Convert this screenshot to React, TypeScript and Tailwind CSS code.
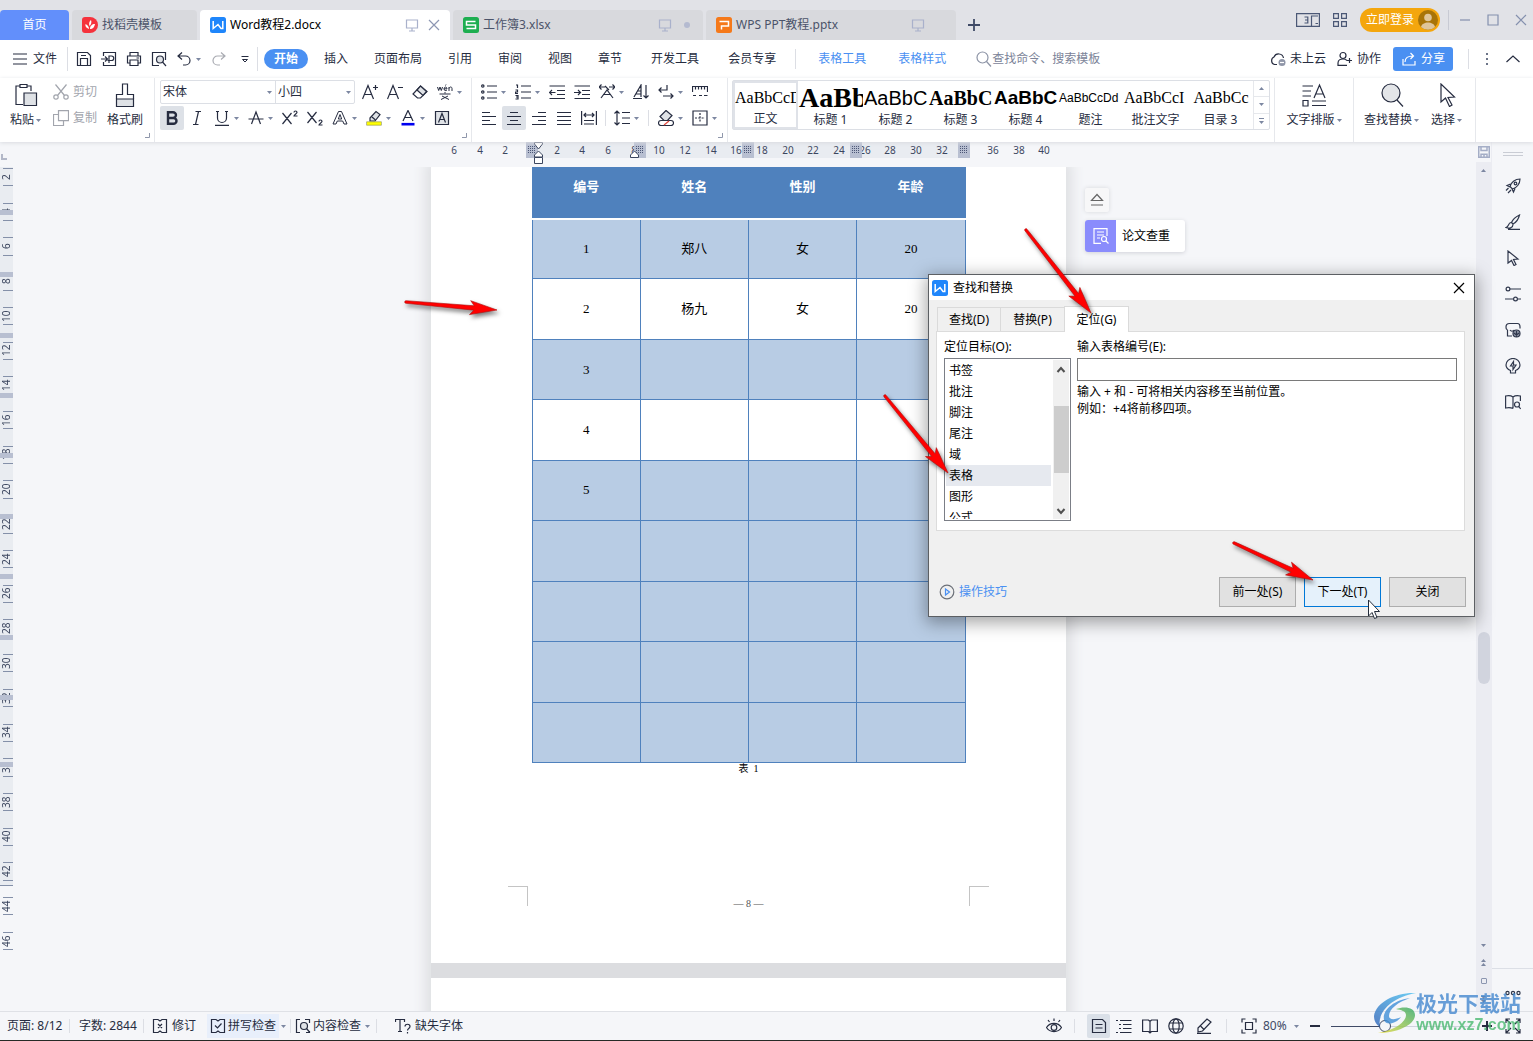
import React from 'react';

type IconProps = { children: React.ReactNode; className?: string; box?: string };

const Icon: React.FC<IconProps> = ({ children, className = 'size-4', box = '0 0 16 16' }) => (
  <svg
    viewBox={box}
    className={`shrink-0 ${className}`}
    fill="none"
    stroke="currentColor"
    strokeWidth="1.2"
    aria-hidden="true"
  >
    {children}
  </svg>
);

const Caret = ({ className = '' }: { className?: string }) => (
  <svg viewBox="0 0 5 3" className={`h-[3px] w-[5px] shrink-0 ${className}`} fill="#7c87a1" aria-hidden="true">
    <path d="M0 0h5L2.5 3z" />
  </svg>
);

const icons = {
  save: <><path d="M1.5 1.5h10l3 3v10h-13z" /><path d="M4.5 14V7.500h7V14M5 4.500h5" /></>,
  exportPdf: <><path d="M2.500 5V1.500h12v13h-12V11" /><path d="M0 8h6M4 5.500 6.500 8 4 10.500M8 12V5h2.500a2 2 0 0 1 0 4.500H6.500" /></>,
  print: <><path d="M4 5V1.500h8V5M4 12H1.500V5h13v7H12" /><path d="M4 9h8v5.500H4zM10.500 7H13" /></>,
  preview: <><path d="M14.500 9V1.500h-13v13H8" /><circle cx="9" cy="8.500" r="3.500" fill="#dfe2e6" /><path d="m11.500 11 3.500 4" /></>,
  undo: <path d="M6 1.500 2 5l4 3.500M2 5h7.500a4.500 4.500 0 0 1 0 9H7" />,
  redo: <path d="M10 1.500 14 5l-4 3.500M14 5H6.500a4.500 4.500 0 0 0 0 9H9" />,
  search: <><circle cx="6.500" cy="6.500" r="5.500" /><path d="m10.500 10.500 4.500 5" /></>,
  monitor: <path d="M2.500 3h11v8h-11zM8 11v3M5 14h6" />,
  cross: <path d="m3 3 10 10M13 3 3 13" />,
  scissors: <><circle cx="3" cy="13" r="2.200" /><circle cx="13" cy="13" r="2.200" /><path d="M2.500.500 11.500 11.500M13.500.500 4.500 11.500" /></>,
  copy: <><path d="M5.500.600h10v10h-10z" /><path d="M5.500 4.500h-5v11h10v-5" /></>,
  eraser: <><path d="m8.500 2 6.500 5.500-6.500 6.500h-3L1 10z" /><path d="m5 6 6 5.500 3.500-4L8.500 2z" fill="#dfe2e6" /></>,
  italic: <path d="M6.500 1.500H12M4 14.500h5.500M9.500 1.500l-3 13" />,
  underline: <path d="M2 1.500h3M11 1.500h3M3.500 1.500V8a4 4 0 0 0 9 0V1.500M1 15.400h14" />,
  strike: <path d="M3.500 14 8 2l4.500 12M.500 9h15" />,
  bullets: <><circle cx="1.800" cy="2" r="1.200" /><circle cx="1.800" cy="8" r="1.200" /><circle cx="1.800" cy="14" r="1.200" /><path d="M6 2h10M6 8h10M6 14h10" /></>,
  numbers: <path d="M1 1h1.500v3M.500 6h2v2h-2v1.500h2.500M.500 11.500h2.500v3.500H.500M1 13h2M6 2h10M6 8h10M6 14h10" />,
  outdent: <path d="M.500 2H16M8 6.500h8M8 10.500h8M.500 14.500H16M6.500 8.500h-6M3 6 .500 8.500 3 11" />,
  indent: <path d="M.500 2H16M8 6.500h8M8 10.500h8M.500 14.500H16M0 8.500h6.500M4 6l2.500 2.500L4 11" />,
  charWidth: <path d="m2 14 6-8 6 8M4 10.500h8M0 3h6M10 3h6M2.500.500 0 3l2.500 2.500M13.500.500 16 3l-2.500 2.500M6 2l4 4" />,
  sort: <path d="m1 13 7-12v12M3 10h5M4.500 7H8M0 14.500h9M13 1v13M10.500 11.500 13 14l2.500-2.500" />,
  wrap: <path d="M9 1v5H1M3.500 3.500 1 6l2.500 2.500M5 12h10M12.500 9.500 15 12l-2.500 2.500" />,
  tabStops: <path d="M.500 8V2.500h15V8M3.500 2.500v3M6.500 2.500v3M9.500 2.500v3M12.500 2.500v3M1 11.500h3M7 11.500h3M12 11.500h3.500" />,
  left: <path d="M1 2.500h8M1 6.500h14M1 10.500h8M1 14.500h14" />,
  center: <path d="M4 2.500h8M1 6.500h14M4 10.500h8M1 14.500h14" />,
  right: <path d="M7 2.500h8M1 6.500h14M7 10.500h8M1 14.500h14" />,
  justify: <path d="M1 2.500h14M1 6.500h14M1 10.500h14M1 14.500h14" />,
  distribute: <path d="M.600 1v14M15.400 1v14M3 5h10M5 3 3 5l2 2M11 3l2 2-2 2M3 10.500h10M3 14h10" />,
  spacing: <path d="M3 1v14M.500 3.500 3 1l2.500 2.500M.500 12.500 3 15l2.500-2.500M8 2.500h8M8 8h8M8 13.500h8" />,
  fill: <><path d="m8 .500 6 5-4.500 5H6l-4-4z" fill="#dfe2e6" /><path d="M3 10.500h10a2 2 0 0 1 0 5H3a2 2 0 0 1 0-5z" fill="#fff" /><path d="m6 15 5-4" stroke="#e0483e" /></>,
  borders: <><path d="M1 1h14v14H1z" /><path d="M8 3v10M3 8h10" strokeDasharray="2 1.300" /></>,
  pen: <><path d="m2 10 9-9 4 3-8.500 9L2 14z" /><path d="M4.500 8 8 11.500M1 15.400h14" /></>,
  pointer: <path d="M3 1v12l3.500-2.500L9 15.500l2-1-2.500-5 4.500-.500z" />,
  sliders: <><circle cx="3" cy="3" r="1.900" /><path d="M5 3h11M0 13h8.500M12.500 13H16" /><circle cx="10.500" cy="13" r="1.900" /></>,
  rocket: <><path d="M15 1C10 1 6 4.500 5 8.500L7.500 11C11.500 10 15 6 15 1zM5.500 6 2 7.500 5 9M10 10.500 8.500 14 7 11M3.500 10 1 12.500M6 12l-3 3" /><circle cx="10.500" cy="5.500" r="1.300" /></>,
  brush: <path d="M14.500 1c-4 2-7 5-8 7.500l1.500 1.500C11 8.500 13.500 5 14.500 1zM6 8.500C3 9 4 12.500 1 13.500c3 1.500 7 .500 7-3M3 15.400h12" />,
  shapes: <><path d="M7 14H2.500V8M2.500 8A3 3 0 0 1 1 5c0-3 2-3.500 3.500-3.500h8C14 1.500 15 3 15 5v1.500M5 8c1 1.500 3 1.500 4 0" /><circle cx="11.500" cy="11.500" r="3.500" fill="#8e95a5" /><path d="M11.500 15V9M9 11l2.500 2L14 11" /></>,
  bulb: <><path d="M5.500 12.500C2 11 1 9 1 7a7 6.500 0 0 1 14 0c0 2-1 4-4.500 5.500V15h-5z" /><path d="M8.500 3.500 5.500 8H8v3.500L11 7H8.500z" /></>,
  bookSearch: <><path d="M8 3v11.500M8 3C6 1.500 3 1.500.600 2v12c2.400-.500 5.400-.500 7.400.500M8 3c2-1.500 5-1.500 7.400-1V7" /><circle cx="12" cy="10.500" r="2.500" /><path d="m13.700 12.300 2 2.700" /></>,
  pageDoc: <path d="M1.500 1.500h10l3 3v10h-13zM4.500 6.500h7M4.500 10h7" />,
  outline: <path d="M0 2.500h2M4 2.500h11.500M3 6.500h2M7 6.500h8.500M3 10.500h2M7 10.500h8.500M0 14.500h2M4 14.500h11.500" />,
  book: <path d="M8 3v12M.600 2H6.500L8 3.500 9.500 2h5.900v11.500H9.500L8 15l-1.500-1.500H.600z" />,
  globe: <><circle cx="8" cy="8" r="7.200" /><ellipse cx="8" cy="8" rx="3.200" ry="7.200" /><path d="M1.500 5h13M1.500 11h13" /></>,
  fit: <path d="M4.500 1H1v3.500M11.500 1H15v3.500M4.500 15H1v-3.500M11.500 15H15v-3.500M4.500 4.500h7v7h-7z" />,
  full: <path d="M5 1H1v4M11 1h4v4M5 15H1v-4M11 15h4v-4M1 1l5 5M15 1l-5 5M1 15l5-5M15 15l-5-5" />,
  eye: <><path d="M.500 9.500C4 4 12 4 15.500 9.500 12 15 4 15 .500 9.500zM8 3V.500M3.500 4 2 2M12.500 4 14 2" /><circle cx="8" cy="9.500" r="2.800" /></>,
  checkBox: <path d="M6 1.500H1.500v13H6L8 13l2 1.500h4.500v-13H10L8 3zM5 7.500l2.500 2.500 4-4.500" />,
  reviseBox: <path d="M6 1.500H1.500v13H6L8 13l2 1.500h4.500v-13H10L8 3zM6 6l4 4M10 6l-4 4" />,
};

const WpsLogo = ({ color, letter, size = 'size-4' }: { color: string; letter: 'w' | 's' | 'p'; size?: string }) => (
  <svg viewBox="0 0 16 16" className={`shrink-0 ${size}`} fill="none" stroke="#fff" strokeWidth="1.500" aria-hidden="true">
    <rect width="16" height="16" rx="2.500" fill={color} stroke="none" />
    {letter === 'w' && <path d="M3.200 4v7.500L8 7.500l3 4h1.800V4" />}
    {letter === 's' && <path d="M12.500 4.500h-9V8h9v3.500h-9" />}
    {letter === 'p' && <path d="M3.500 4.500h9V9H5.500v3.500" />}
  </svg>
);

type TabProps = { logo: React.ReactNode; title: string; active?: boolean; end?: 'close' | 'dot' };

const DocTab: React.FC<TabProps> = ({ logo, title, active, end }) => (
  <div
    className={`flex h-[30px] w-[250px] shrink-0 items-center rounded-t pl-2.5 ${
      active ? 'bg-white text-black' : 'bg-[#d8d9dd] text-[#4b5369]'
    }`}
  >
    {logo}
    <span className="ml-1 flex-1">{title}</span>
    <Icon className="size-4 text-[#a9b1cb]">{icons.monitor}</Icon>
    <span className="mr-0.5 flex w-7 justify-center">
      {end === 'close' && (
        <button aria-label="关闭标签"><Icon className="size-4 text-[#8d97b3]">{icons.cross}</Icon></button>
      )}
      {end === 'dot' && <span className="size-1.5 rounded-full bg-[#b4bad0]" />}
    </span>
  </div>
);

const TitleBar = () => (
  <header className="flex h-10 shrink-0 items-end bg-[#e1e2e7]">
    <div className="flex gap-[3px]">
      <button className="h-[30px] w-[69px] rounded-t bg-[#628ffb] text-white">首页</button>
      <div className="flex h-[30px] w-[125px] items-center rounded-t bg-[#d8d9dd] pl-2.5 text-[#4b5369]">
        <svg viewBox="0 0 16 16" className="size-4" aria-hidden="true">
          <path d="M0 3a3 3 0 0 1 3-3h5a8 8 0 0 1 0 16H3a3 3 0 0 1-3-3z" fill="#f5323c" />
          <path d="M7 12C4 11 3 9 3.500 7 6 8 7 10 7 12zM7.500 9C6.500 6.500 7.500 4 9 3c1 2 0 5-1.500 6zM8 12c0-3 2-5 5-5-.500 3-2 5-5 5z" fill="#fff" />
        </svg>
        <span className="ml-1">找稻壳模板</span>
      </div>
      <DocTab logo={<WpsLogo color="#1f86fb" letter="w" />} title="Word教程2.docx" active end="close" />
      <DocTab logo={<WpsLogo color="#1dae50" letter="s" />} title="工作簿3.xlsx" end="dot" />
      <DocTab logo={<WpsLogo color="#f5791a" letter="p" />} title="WPS PPT教程.pptx" />
    </div>
    <button aria-label="新建" className="ml-2.5 flex h-[30px] items-center text-[#3f4a66]">
      <Icon><path d="M8 2v12M2 8h12" strokeWidth="1.800" /></Icon>
    </button>
    <div className="ml-auto flex h-10 items-center pr-1 text-[#4b5876]">
      <Icon className="h-4 w-6" box="0 0 24 16">
        <path d="M15.500 14.400H.600V1.600h22.800v12.800h-7.900V4H22M19.500 11.500h2.500M8.500 5h3.300v6H8.500M9 8h2.800" />
      </Icon>
      <Icon className="ml-3 size-4"><path d="M1.600 1.600h4.800v4.800H1.600zM9.600 1.600h4.800v4.800H9.600zM1.600 9.600h4.800v4.800H1.600zM9.600 9.600h4.800v4.800H9.600z" /></Icon>
      <button className="ml-3 flex h-6 w-20 items-center justify-between rounded-full bg-[#f4a60d] pr-0.5 pl-1.5 text-white">
        立即登录
        <svg viewBox="0 0 20 20" className="size-5" aria-hidden="true">
          <circle cx="10" cy="10" r="10" fill="#a87408" />
          <circle cx="10" cy="7.500" r="3.800" fill="#dfc59a" />
          <path d="M3 17c1-6 13-6 14 0a10 10 0 0 1-14 0z" fill="#dfc59a" />
        </svg>
      </button>
      <span className="mx-2 h-5 w-px bg-[#c8cad3]" />
      <div className="flex gap-3 text-[#8490ae]">
        <button aria-label="最小化"><Icon><path d="M3 8h10" /></Icon></button>
        <button aria-label="最大化"><Icon><path d="M3 3h10v10H3z" /></Icon></button>
        <button aria-label="关闭"><Icon>{icons.cross}</Icon></button>
      </div>
    </div>
  </header>
);

const Divider = ({ className = 'h-6' }: { className?: string }) => (
  <span className={`w-px shrink-0 bg-[#dcdee4] ${className}`} />
);

const menuTabs = ['插入', '页面布局', '引用', '审阅', '视图', '章节'];

const MenuBar = () => (
  <nav className="flex h-[38px] shrink-0 items-center bg-white text-[#262c40]">
    <button className="ml-3 flex items-center gap-[5px]">
      <Icon><path d="M1 3h14M1 8h14M1 13h14" /></Icon>文件
    </button>
    <Divider className="ml-2.5 h-6" />
    <div className="flex w-[189px] items-center pl-2">
      <button aria-label="保存"><Icon>{icons.save}</Icon></button>
      <button aria-label="输出为PDF" className="ml-[9px]"><Icon>{icons.exportPdf}</Icon></button>
      <button aria-label="打印" className="ml-[9px]"><Icon>{icons.print}</Icon></button>
      <button aria-label="打印预览" className="ml-[9px]"><Icon>{icons.preview}</Icon></button>
      <button aria-label="撤销" className="ml-[9px] flex items-center gap-1"><Icon>{icons.undo}</Icon><Caret /></button>
      <button aria-label="恢复" className="ml-2.5 text-[#a9abb2]"><Icon>{icons.redo}</Icon></button>
      <button aria-label="更多" className="ml-2.5"><Icon><path d="M4.500 5.500h7M5.500 8.500 8 11l2.500-2.500z" strokeWidth="1" /></Icon></button>
    </div>
    <Divider />
    <button className="ml-1.5 h-5 w-11 rounded-full bg-[#4a90f2] font-bold text-white">开始</button>
    <div className="ml-4 flex gap-[26px]">
      {menuTabs.map((tab) => <button key={tab}>{tab}</button>)}
    </div>
    <div className="ml-[29px] flex gap-[29px]">
      <button>开发工具</button>
      <button>会员专享</button>
    </div>
    <Divider className="ml-[19px] h-5" />
    <div className="ml-[22px] flex gap-8 text-[#4a90f2]">
      <button>表格工具</button>
      <button>表格样式</button>
    </div>
    <label className="ml-[30px] flex items-center text-[#8d94a6]">
      <Icon>{icons.search}</Icon>
      <input
        aria-label="查找命令"
        placeholder="查找命令、搜索模板"
        className="w-[120px] outline-none placeholder:text-[#7b8398]"
      />
    </label>
    <div className="ml-auto flex items-center pr-3">
      <button className="flex items-center gap-1">
        <Icon><path d="M7 13.500H4.500a4 4 0 0 1-.500-7.500 5 5 0 0 1 9.500 1" /><circle cx="12" cy="11.500" r="3.500" fill="#8f96a8" stroke="none" /><path d="M10 11.500h4" stroke="#fff" /></Icon>
        未上云
      </button>
      <button className="ml-[11px] flex items-center gap-1">
        <Icon><circle cx="6" cy="4.500" r="3" /><path d="M10 14.400H1V12c0-3 3-4 5-4s3 .500 4 1.500M12.500 7v5M10 9.500h5" /></Icon>
        协作
      </button>
      <button className="ml-3 flex h-6 w-[60px] items-center justify-center gap-1 rounded-[3px] bg-[#4a90f2] text-white">
        <Icon><path d="M2 8v6h12v-4M4 11c0-4 3-6 8-6M9.500 2l3 3-3 3" /></Icon>
        分享
      </button>
      <Divider className="ml-[15px] h-5" />
      <button aria-label="更多选项" className="ml-2.5"><Icon><path d="M8 2v2M8 7v2M8 12v2" strokeWidth="2" stroke="#6c7488" /></Icon></button>
      <button aria-label="收起功能区" className="ml-2.5"><Icon><path d="m1.500 11 6.500-6 6.500 6" /></Icon></button>
    </div>
  </nav>
);

type ToolProps = { label: string; children: React.ReactNode; caret?: boolean; active?: boolean };

const Tool: React.FC<ToolProps> = ({ label, children, caret, active }) => (
  <button aria-label={label} className="flex shrink-0 items-center">
    <span className={`flex size-6 items-center justify-center rounded-[2px] ${active ? 'bg-[#dde1e7]' : ''}`}>
      <Icon>{children}</Icon>
    </span>
    {caret && <span className="w-[9px]"><Caret /></span>}
  </button>
);

const BigTool = ({ label, icon, caret }: { label: string; icon: React.ReactNode; caret?: boolean }) => (
  <button className="flex flex-col items-center">
    <span className="flex h-[30px] items-center">{icon}</span>
    <span className="flex h-5 items-center gap-0.5">{label}{caret && <Caret />}</span>
  </button>
);

const Corner = () => (
  <svg viewBox="0 0 5 5" className="absolute right-1 bottom-1 size-[5px]" fill="none" stroke="#8f97ab" aria-hidden="true">
    <path d="M4.500 0v4.500H0" />
  </svg>
);

const group = 'relative flex shrink-0 border-r border-[#e6e8ec] pt-0.5';

const styleCells = [
  { name: '正文', font: "font-['Liberation_Serif'] text-base", sample: 'AaBbCcD' },
  { name: '标题 1', font: "font-['Liberation_Serif'] text-[28px] font-bold", sample: 'AaBb' },
  { name: '标题 2', font: "font-['Liberation_Sans'] text-xl", sample: 'AaBbC' },
  { name: '标题 3', font: "font-['Liberation_Serif'] text-xl font-bold", sample: 'AaBbC' },
  { name: '标题 4', font: "font-['Liberation_Sans'] text-[19px] font-bold", sample: 'AaBbC' },
  { name: '题注', font: "font-['Liberation_Sans'] text-xs", sample: 'AaBbCcDd' },
  { name: '批注文字', font: "font-['Liberation_Serif'] text-base", sample: 'AaBbCcI' },
  { name: '目录 3', font: "font-['Liberation_Serif'] text-base", sample: 'AaBbCc' },
];

const Ribbon = () => (
  <section className="relative z-10 flex h-16 shrink-0 bg-white text-[#262c40] shadow-[0_1px_4px_#d9dbe0]">
    <div className={`${group} w-[155px] pl-2.5`}>
      <BigTool label="粘贴" caret icon={
        <Icon className="size-6" box="0 0 24 24">
          <path d="M9 21.500H2V3h4M13 3h4v5" /><path d="M6 1.500h7v3H6z" /><path d="M10 10h12.500v12.500H10z" fill="#dfe2e6" />
        </Icon>
      } />
      <div className="ml-3 flex flex-col gap-0.5 text-[#a2a5ad]">
        <button className="flex h-6 items-center gap-1"><Icon>{icons.scissors}</Icon>剪切</button>
        <button className="flex h-6 items-center gap-1"><Icon>{icons.copy}</Icon>复制</button>
      </div>
      <div className="ml-2.5">
        <BigTool label="格式刷" icon={
          <Icon className="size-6" box="0 0 24 24">
            <path d="M3.500 16h17v7.500h-17z" fill="#dfe2e6" /><path d="M3.500 16v-4.500h6V1h5v10.500h6V16" />
          </Icon>
        } />
      </div>
      <Corner />
    </div>

    <div className={`${group} w-[317px] flex-col gap-0.5 pl-[5px]`}>
      <div className="flex gap-px">
        <div className="mr-0.5 flex h-6 w-[195px] rounded-[2px] border border-[#dcdfe5]">
          <label className="relative flex w-[115px] items-center border-r border-[#dcdfe5]">
            <select aria-label="字体" className="w-full appearance-none pl-0.5 outline-none"><option>宋体</option></select>
            <Caret className="absolute right-[3px]" />
          </label>
          <label className="relative flex flex-1 items-center">
            <select aria-label="字号" className="w-full appearance-none pl-0.5 outline-none"><option>小四</option></select>
            <Caret className="absolute right-[3px]" />
          </label>
        </div>
        <Tool label="增大字号"><path d="m.500 15 5.500-13.500L11.500 15M2.500 10.500h7M11 3.500h5M13.500 1v5" /></Tool>
        <Tool label="减小字号"><path d="m.500 15 5.500-13.500L11.500 15M2.500 10.500h7M11 3.500h5" /></Tool>
        <Tool label="清除格式">{icons.eraser}</Tool>
        <Tool label="拼音指南" caret>
          <path d="m.500 3 1.200 3.500L3 3l1.300 3.500L5.500 3M7 4.800h3C10 2.500 7 2.500 7 4.800s2 2 3 1.200M9 .500 8.500 1.500M12 7V3M12 4.500c.500-2 3-2 3 0V7M8 8V9.500M2.500 10h11M5 12l7 3.500M11 12l-7 3.500" strokeWidth="1" />
        </Tool>
      </div>
      <div className="flex gap-px">
        <Tool label="加粗" active><path d="M4 2.200h5a3 2.900 0 0 1 0 5.800H4zM4 8h5.500a3 2.900 0 0 1 0 5.800H4z" strokeWidth="2.400" /></Tool>
        <Tool label="倾斜">{icons.italic}</Tool>
        <Tool label="下划线" caret>{icons.underline}</Tool>
        <Tool label="删除线" caret>{icons.strike}</Tool>
        <Tool label="上标"><path d="m.500 3 9 11M9.500 3l-9 11M12 2.500c0-2 3-2 3 0 0 1-3 2-3 3.500h3.500" /></Tool>
        <Tool label="下标"><path d="m.500 2 9 11M9.500 2l-9 11M12 11.500c0-2 3-2 3 0 0 1-3 2-3 3.500h3.500" /></Tool>
        <Tool label="文字效果" caret><path d="M1 14 6.500 1.500h3L15 14h-3l-1.300-3H5.300L4 14zM8 4.500 6.300 9h3.400z" strokeWidth="1" /></Tool>
        <Tool label="突出显示" caret>
          <path d="m4 8 6-6.500 4 3L9 11H4z" fill="#dfe2e6" /><path d="m6 7 3.500 3" /><path d="M1 13.500h14" stroke="#ff0" strokeWidth="3.500" /><path d="M.500 11.800h15v3.400H.500z" stroke="#8b8f4a" strokeWidth=".600" />
        </Tool>
        <Tool label="字体颜色" caret><path d="m3 11 5-10.500L13 11M5 7.500h6" /><path d="M1.500 14.200h13" stroke="#0000f0" strokeWidth="2.600" /></Tool>
        <Tool label="字符底纹"><path d="M1.500 1.500h13v13h-13z" fill="#dfe2e6" /><path d="m4.500 12.500 3.500-9 3.500 9M5.500 9.500h5" /></Tool>
      </div>
      <Corner />
    </div>

    <div className={`${group} w-64 flex-col gap-0.5 pl-[5px]`}>
      <div className="flex gap-px">
        <Tool label="项目符号" caret>{icons.bullets}</Tool>
        <Tool label="编号" caret>{icons.numbers}</Tool>
        <Tool label="减少缩进">{icons.outdent}</Tool>
        <Tool label="增加缩进">{icons.indent}</Tool>
        <Tool label="中文版式" caret>{icons.charWidth}</Tool>
        <Tool label="排序">{icons.sort}</Tool>
        <Tool label="换行" caret>{icons.wrap}</Tool>
        <Tool label="制表位">{icons.tabStops}</Tool>
      </div>
      <div className="flex items-center gap-px">
        <Tool label="左对齐">{icons.left}</Tool>
        <Tool label="居中" active>{icons.center}</Tool>
        <Tool label="右对齐">{icons.right}</Tool>
        <Tool label="两端对齐">{icons.justify}</Tool>
        <Tool label="分散对齐">{icons.distribute}</Tool>
        <Divider className="mx-[3px] h-4" />
        <Tool label="行距" caret>{icons.spacing}</Tool>
        <Divider className="mx-1 h-4" />
        <Tool label="底纹颜色" caret>{icons.fill}</Tool>
        <Tool label="边框" caret>{icons.borders}</Tool>
      </div>
      <Corner />
    </div>

    <div className={`${group} w-[547px] pl-1`}>
      <div className="flex h-[50px] w-[538px] rounded-[2px] border border-[#dcdfe5]">
        {styleCells.map((cell, i) => (
          <button
            key={cell.name}
            className={`flex w-[65px] shrink-0 flex-col items-center overflow-hidden ${
              i === 0 ? 'border-2 border-[#dfe2e8]' : ''
            }`}
          >
            <span
              className={`flex w-full items-center overflow-hidden pt-0.5 text-black ${cell.font} ${
                i === 0 ? 'h-[29px]' : 'h-[31px] pl-px'
              } ${cell.name === '目录 3' ? 'justify-center' : ''}`}
            >
              {cell.sample}
            </span>
            <span className="leading-4">{cell.name}</span>
          </button>
        ))}
        <div className="flex w-4 flex-col divide-y divide-[#e6e8ec] border-l border-[#e6e8ec]">
          <button aria-label="上一行" className="flex flex-1 items-center justify-center"><Caret className="rotate-180" /></button>
          <button aria-label="下一行" className="flex flex-1 items-center justify-center"><Caret /></button>
          <button aria-label="展开样式" className="flex flex-1 flex-col items-center justify-center gap-0.5">
            <span className="h-px w-[5px] bg-[#7c87a1]" /><Caret />
          </button>
        </div>
      </div>
    </div>

    <div className={`${group} w-[79px] justify-center`}>
      <BigTool label="文字排版" caret icon={
        <Icon className="size-6" box="0 0 24 24">
          <path d="M.500 3H11M.500 8H9M.500 13H9M1 17.500h5V23H1zM10 18h14M10 22.500h14M12 15l5.500-13L23 15M14 11h7" />
        </Icon>
      } />
    </div>
    <div className={`${group} w-[122px] gap-3 pl-2.5`}>
      <BigTool label="查找替换" caret icon={
        <Icon className="size-6" box="0 0 24 24"><circle cx="11" cy="10" r="9" fill="#e3e5e8" /><path d="m17 17 6 6.500" /></Icon>
      } />
      <BigTool label="选择" caret icon={
        <Icon className="size-6" box="0 0 24 24"><path d="M6 1v18l4.500-4 4 8.500 2.500-1.500-4-7.500 6.500-.500z" /></Icon>
      } />
    </div>
  </section>
);

const hLabels = [-6, -4, -2, 2, 4, 6, 8, 10, 12, 14, 16, 18, 20, 22, 24, 26, 28, 30, 32, 36, 38, 40];
const columnMarks = [95, 203, 311, 419, 527];

const HorizontalRuler = () => (
  <div className="h-[25px] shrink-0 pl-2">
    <div className="relative mx-auto h-full w-[635px] text-[10px] leading-4 text-[#3c465f]">
      <div className="absolute top-0 left-[95px] h-4 w-[444px] bg-[#e9ecf1]" />
      {hLabels.map((n) => (
        <span key={n} className="absolute top-0 w-5 text-center" style={{ left: Math.round(90 + n * 12.83) }}>
          {Math.abs(n)}
        </span>
      ))}
      {columnMarks.map((x) => (
        <span key={x} className="absolute top-0 flex h-4 w-3 items-center justify-center bg-[#b8bfd1]" style={{ left: x }}>
          <svg viewBox="0 0 8 8" className="size-2" fill="none" stroke="#4b5676" strokeDasharray="1 1" aria-hidden="true">
            <path d="M0 .500h8M0 2.500h8M0 4.500h8M0 6.500h8" />
          </svg>
        </span>
      ))}
      <svg viewBox="0 0 11 22" className="absolute top-0 left-[102px] h-[22px] w-[11px]" fill="#fff" stroke="#3c465f" aria-hidden="true">
        <path d="M1.500.500h8V2l-4 5-4-5zM5.500 9l4 4v2h-8v-2zM1.500 15.500h8v6h-8z" />
      </svg>
      <svg viewBox="0 0 11 8" className="absolute top-2 left-[198px] h-2 w-[11px]" fill="#fff" stroke="#3c465f" aria-hidden="true">
        <path d="m5.500 1 4 4v2.500h-8V5z" />
      </svg>
    </div>
  </div>
);

const vLabels = Array.from({ length: 23 }, (_, i) => (i + 1) * 2);
const vTicks = Array.from({ length: 46 }, (_, i) => Math.round(1 + i * 17.36));
const rowMarks = [43, 105, 166, 226, 286, 347, 407, 468, 528, 595];

const VerticalRuler = () => (
  <div className="w-[13px] shrink-0 text-[10px] leading-3 text-[#3c465f]">
    <div className="flex h-[25px] items-end pb-[7px] pl-px">
      <span className="size-1.5 border-b-2 border-l-2 border-[#b3b8c8]" />
    </div>
    <div className="relative h-[719px] border-b border-[#8490a9] bg-[#e9ecf1]">
      {vTicks.map((y) => (
        <span key={y} className="absolute right-0 h-px w-2.5 bg-[#8490a9]" style={{ top: y }} />
      ))}
      {vLabels.map((n) => (
        <span
          key={n}
          className="absolute left-0 h-5 w-3 rotate-180 text-center [writing-mode:vertical-rl]"
          style={{ top: Math.round(n * 17.36 - 35) }}
        >
          {n}
        </span>
      ))}
      {rowMarks.map((y) => (
        <span key={y} className="absolute left-0 h-[5px] w-full bg-[#b8bfd1]" style={{ top: y }} />
      ))}
    </div>
  </div>
);

const rows = [
  ['1', '郑八', '女', '20'],
  ['2', '杨九', '女', '20'],
  ['3', '', '', ''],
  ['4', '', '', ''],
  ['5', '', '', ''],
  ['', '', '', ''],
  ['', '', '', ''],
  ['', '', '', ''],
  ['', '', '', ''],
];

const DocumentView = () => (
  <div className="min-h-0 flex-1 overflow-hidden pl-2">
    <div className="relative mx-auto w-[635px] bg-[#dcdde0] shadow-[0_0_12px_6px_#dfe0e3]">
      <article className="h-[796px] bg-white font-['Liberation_Serif','Noto_Sans_CJK_SC',serif] text-black">
        <table className="mx-auto h-[596px] w-[434px] table-fixed border-collapse border border-[#4f81bd] text-center text-[13px]">
          <thead>
            <tr className="h-[51px] border-b-2 border-b-white bg-[#4f81bd] text-white">
              {['编号', '姓名', '性别', '年龄'].map((h) => (
                <th key={h} className="pb-3 font-bold">{h}</th>
              ))}
            </tr>
          </thead>
          <tbody>
            {rows.map((row, i) => (
              <tr key={i} className={`h-[60px] ${i === 1 || i === 3 ? 'bg-white' : 'bg-[#b8cce4]'}`}>
                {row.map((cell, j) => (
                  <td key={j} className={`border-x border-b border-[#4f81bd] ${i === 0 ? '' : 'border-t'}`}>{cell}</td>
                ))}
              </tr>
            ))}
          </tbody>
        </table>
        <p className="h-3 text-center text-[10px] leading-3">表 &nbsp;1</p>
        <footer className="mx-[77px] mt-[111px] flex justify-between">
          <span className="size-5 border-t border-r border-[#c4c4c4]" />
          <span className="mt-3 text-[10px] leading-3 text-[#555]">— 8 —</span>
          <span className="size-5 border-t border-l border-[#c4c4c4]" />
        </footer>
      </article>
      <div className="mt-[15px] h-[60px] bg-white" />

      {/* floating tools beside the page */}
      <div className="absolute top-[21px] left-[654px] flex flex-col items-start gap-2">
        <button aria-label="收起" className="flex size-6 items-center justify-center rounded-[2px] bg-[#f7f7f8] text-[#666] shadow-[0_0_4px_#d5d7dc]">
          <Icon><path d="m8 2.500 5.500 6h-11zM2 13h12" /></Icon>
        </button>
        <button className="flex h-8 w-[100px] items-center rounded-[3px] bg-white text-black shadow-[0_1px_4px_#d0d2d8]">
          <span className="flex h-8 w-[31px] items-center justify-center rounded-l-[3px] bg-[#8a8cfc] text-white">
            <Icon><path d="M8 15.400H1V.600h13V8M4 4h7M4 7h7M4 10h3" /><circle cx="11" cy="11" r="2.500" /><path d="m13 13 2.500 2.500" /></Icon>
          </span>
          <span className="ml-1.5">论文查重</span>
        </button>
      </div>
    </div>
  </div>
);

const ScrollBar = () => (
  <div className="flex w-4 shrink-0 flex-col items-center bg-[#ebecf2] pr-px text-[#7c87a1]">
    <div className="flex h-5 w-full items-center justify-center bg-[#f5f6f9]">
      <Icon className="size-3 text-[#a4adc6]"><path d="M1 1h14v14H1zM4 1v5h8V1M4 15v-4h8v4M8 11v4" strokeWidth="2" /></Icon>
    </div>
    <Caret className="mt-[7px] rotate-180" />
    <div className="mt-[460px] h-[52px] w-3 rounded-md bg-[#d1d4de]" />
    <div className="mt-auto mb-2 flex flex-col items-center gap-3">
      <Caret />
      <span className="flex flex-col gap-px"><Caret className="rotate-180" /><Caret className="rotate-180" /></span>
      <span className="size-1.5 rounded-[1px] border border-[#8c96b0]" />
      <span className="flex flex-col gap-px"><Caret /><Caret /></span>
    </div>
  </div>
);

const sideTools = [
  { label: '快捷', icon: icons.rocket },
  { label: '样式', icon: icons.brush },
  { label: '选择窗格', icon: icons.pointer },
  { label: '设置', icon: icons.sliders },
  { label: '素材', icon: icons.shapes },
  { label: '提示', icon: icons.bulb },
  { label: '帮助', icon: icons.bookSearch },
];

const SideBar = () => (
  <aside className="flex w-[41px] shrink-0 flex-col items-center text-[#2f374c]">
    <span className="mt-2.5 h-1 w-5 border-y border-[#c9ccd4]" />
    <div className="mt-[22px] flex flex-col gap-5">
      {sideTools.map((tool) => (
        <button key={tool.label} aria-label={tool.label}><Icon>{tool.icon}</Icon></button>
      ))}
    </div>
    <div className="mt-auto mb-2.5 flex w-full flex-col items-center gap-4 border-t border-[#dcdfe6] pt-4">
      <button aria-label="更多工具">
        <Icon><circle cx="2.500" cy="8" r="1.600" /><circle cx="8" cy="8" r="1.600" /><circle cx="13.500" cy="8" r="1.600" /></Icon>
      </button>
    </div>
  </aside>
);

const StatusBar = () => (
  <footer className="flex h-[30px] shrink-0 items-center border-t border-b border-t-[#dfe1e6] border-b-[#262a26] bg-[#f5f6f9] text-[#262c40]">
    <span className="ml-[7px] w-[62px]">页面: 8/12</span>
    <Divider className="h-3.5" />
    <span className="ml-[9px] w-16">字数: 2844</span>
    <Divider className="h-3.5" />
    <button className="ml-2 flex w-[55px] items-center gap-1"><Icon>{icons.reviseBox}</Icon>修订</button>
    <button className="flex h-6 items-center gap-0.5 bg-[#e8effb] px-[3px]"><Icon>{icons.checkBox}</Icon>拼写检查</button>
    <Caret className="mx-0.5" />
    <Divider className="ml-0.5 h-3.5" />
    <button className="ml-1 flex items-center gap-0.5">
      <Icon><path d="M5 1.500H1.500v13H5M10 1.500h4.500V5M11 14.500h3.500V13" /><circle cx="9" cy="8" r="3.500" fill="#dfe2e6" /><path d="m11.500 10.500 3 3.500" /></Icon>
      内容检查
    </button>
    <Caret className="ml-1" />
    <Divider className="ml-1.5 h-3.5" />
    <button className="ml-[18px] flex items-center gap-1">
      <Icon><path d="M.500 4V1.500h9V4M5 1.500v12M3 13.500h4M10 8.500c0-3 5-3 5 0 0 2-2.500 2-2.500 4M12.500 14v1.400" /></Icon>
      缺失字体
    </button>

    <div className="ml-auto flex items-center pr-3">
      <button aria-label="护眼模式"><Icon>{icons.eye}</Icon></button>
      <Divider className="mx-3 h-3.5" />
      <button aria-label="页面视图" className="flex h-6 w-[23px] items-center justify-center rounded-[2px] bg-[#dae0e8]"><Icon>{icons.pageDoc}</Icon></button>
      <button aria-label="大纲" className="ml-1.5"><Icon>{icons.outline}</Icon></button>
      <button aria-label="阅读版式" className="ml-2.5"><Icon>{icons.book}</Icon></button>
      <button aria-label="Web版式" className="ml-2.5"><Icon>{icons.globe}</Icon></button>
      <button aria-label="写作模式" className="ml-3"><Icon>{icons.pen}</Icon></button>
      <Divider className="ml-3.5 h-3.5" />
      <button aria-label="适应页面" className="ml-3.5"><Icon>{icons.fit}</Icon></button>
      <button className="ml-1.5 flex w-9 items-center justify-between text-[#3f4a66]">80%<Caret /></button>
      <button aria-label="缩小" className="ml-2"><Icon><path d="M3 8h10" strokeWidth="2" /></Icon></button>
      <input
        type="range"
        aria-label="缩放"
        min={0}
        max={100}
        defaultValue={36}
        className="mr-1 ml-2 h-4 w-36 appearance-none bg-[linear-gradient(90deg,#3f4a66_37%,#cfd3dd_37%)] bg-[length:100%_1px] bg-center bg-no-repeat [&::-webkit-slider-thumb]:size-3 [&::-webkit-slider-thumb]:appearance-none [&::-webkit-slider-thumb]:rounded-full [&::-webkit-slider-thumb]:border [&::-webkit-slider-thumb]:border-[#3f4a66] [&::-webkit-slider-thumb]:bg-[#f5f6f9]"
      />
      <button aria-label="放大"><Icon><path d="M3 8h10M8 3v10" strokeWidth="2" /></Icon></button>
      <button aria-label="全屏" className="ml-2.5"><Icon>{icons.full}</Icon></button>
    </div>
  </footer>
);

const targets = ['书签', '批注', '脚注', '尾注', '域', '表格', '图形', '公式'];
const dialogButton = 'h-[30px] w-[77px] border';

const FindDialog = () => (
  <div
    role="dialog"
    aria-labelledby="find-title"
    className="absolute top-[274px] right-[58px] z-20 flex h-[343px] w-[547px] flex-col border border-[#5c5f63] bg-[#f0f0f0] text-black shadow-[0_4px_16px_2px_rgba(0,0,0,0.35)]"
  >
    <div className="flex h-[25px] items-center bg-white pr-[7px] pl-[3px]">
      <WpsLogo color="#1f86fb" letter="w" />
      <h2 id="find-title" className="ml-[5px] flex-1">查找和替换</h2>
      <button aria-label="关闭对话框"><Icon>{icons.cross}</Icon></button>
    </div>
    <div className="mt-1.5 ml-2 flex items-end">
      <button className="h-6 w-[63px] border border-r-0 border-b-0 border-[#dadada]">查找(D)</button>
      <button className="h-6 w-16 border border-r-0 border-b-0 border-[#dadada]">替换(P)</button>
      <button className="relative z-10 -mb-px h-[26px] w-[65px] border border-b-0 border-[#dadada] bg-white">定位(G)</button>
    </div>
    <div className="mr-[9px] ml-[7px] flex h-[200px] border border-[#dcdcdc] bg-white pt-1.5 pl-[7px]">
      <div className="w-[127px]">
        <p id="target-label" className="mb-0.5 h-[18px] leading-[18px]">定位目标(O):</p>
        <div className="flex h-[163px] border border-[#7b7e86] p-px">
          <ul role="listbox" aria-labelledby="target-label" className="flex-1 overflow-hidden">
            {targets.map((t) => (
              <li
                key={t}
                role="option"
                aria-selected={t === '表格'}
                className={`mr-0.5 h-[21px] pl-[3px] leading-[21px] ${t === '表格' ? 'bg-[#e6e9ef]' : ''}`}
              >
                {t}
              </li>
            ))}
          </ul>
          <div className="flex w-4 flex-col items-center bg-[#f0f0f0] text-[#505050]">
            <Icon className="mt-0.5 size-4"><path d="m4.500 10 3.500-4 3.500 4" strokeWidth="2" /></Icon>
            <span className="mt-7 h-[67px] w-[15px] bg-[#cdcdcd]" />
            <Icon className="mt-auto size-4"><path d="m4.500 6 3.500 4 3.500-4" strokeWidth="2" /></Icon>
          </div>
        </div>
      </div>
      <div className="mr-[7px] ml-1.5 flex-1">
        <label htmlFor="table-no" className="mb-0.5 block h-[18px] leading-[18px]">输入表格编号(E):</label>
        <input id="table-no" className="block h-[23px] w-full border border-[#7a7a7a] bg-white px-1 outline-none" />
        <p className="mt-0.5 leading-[17px]">输入 + 和 - 可将相关内容移至当前位置。</p>
        <p className="leading-[17px]">例如：+4将前移四项。</p>
      </div>
    </div>
    <div className="mt-auto mr-2 mb-[9px] ml-2.5 flex items-center gap-2">
      <a href="#tips" className="mr-auto flex items-center gap-1 text-[#4a90f2]">
        <Icon className="size-4 text-[#6c7078]"><circle cx="8" cy="8" r="6.800" /><path d="m6.500 5 4 3-4 3z" stroke="#4a90f2" /></Icon>
        操作技巧
      </a>
      <button className={`${dialogButton} border-[#adadad] bg-[#e1e1e1]`}>前一处(S)</button>
      <button className={`${dialogButton} border-[#0078d7] bg-[#e5f1fb]`}>下一处(T)</button>
      <button className={`${dialogButton} border-[#adadad] bg-[#e1e1e1]`}>关闭</button>
    </div>
  </div>
);

const arrows = [
  { from: [406, 302], to: [497, 310] },
  { from: [1026, 230], to: [1091, 313] },
  { from: [885, 396], to: [948, 473] },
  { from: [1234, 543], to: [1313, 580] },
];

const Annotations = () => (
  <svg className="pointer-events-none absolute top-0 left-0 z-30 size-full" aria-hidden="true">
    {arrows.map(({ from, to }) => {
      const dx = to[0] - from[0];
      const dy = to[1] - from[1];
      const len = Math.hypot(dx, dy);
      const deg = (Math.atan2(dy, dx) * 180) / Math.PI;
      return (
        <g key={from[0]} className="drop-shadow-[2px_3px_2px_rgba(0,0,0,0.5)]">
          <g transform={`translate(${to[0]} ${to[1]}) rotate(${deg})`} fill="#f00" stroke="#b01010" strokeWidth=".600">
            <path d={`M0 0-27-7-23-2.200-${len} -1.300a1.300 1.300 0 0 0 0 2.600L-23 2.200-27 7z`} />
          </g>
        </g>
      );
    })}
    <path d="M1368.500 600v16l3.500-3.500 2.500 6 2.500-1-2.500-6h5z" fill="#fff" stroke="#222b3a" />
  </svg>
);

const Watermark = () => (
  <div className="pointer-events-none absolute right-3 bottom-1.5 z-30 flex items-center opacity-80">
    <svg viewBox="0 0 42 42" className="size-[42px]" aria-hidden="true">
      <defs>
        <linearGradient id="swirl-top" x1="0" y1="1" x2="1" y2="0">
          <stop offset="0" stopColor="#2c62b8" />
          <stop offset="1" stopColor="#4cc3f2" />
        </linearGradient>
        <linearGradient id="swirl-bottom" x1="0" y1="1" x2="1" y2="0">
          <stop offset="0" stopColor="#e8dc3a" />
          <stop offset="1" stopColor="#2fa866" />
        </linearGradient>
      </defs>
      <path d="M42 1C22 0 2 10 0 24c0 6 3 9 6 11-3-14 10-29 36-34z" fill="url(#swirl-top)" />
      <path d="M36 6C20 8 8 18 10 28c2 6 12 4 17-3-6 3-12 3-12-1C15 17 24 10 36 6z" fill="#3f8fd8" />
      <path d="M22 17c8-3 19-2 19 6 0 10-18 18-37 18 14-2 28-10 28-18 0-4-5-5-10-6z" fill="url(#swirl-bottom)" />
    </svg>
    <div className="flex flex-col text-center">
      <span className="text-[21px] leading-6 font-bold text-[#4488cf]">极光下载站</span>
      <span className="font-['Liberation_Sans'] text-base leading-5 font-bold text-[#4cba72]">www.xz7.com</span>
    </div>
  </div>
);

export default function App() {
  return (
    <div className="relative flex h-screen flex-col overflow-hidden bg-[#f5f6f9] font-['Noto_Sans','Noto_Sans_CJK_SC',sans-serif] text-xs leading-4 whitespace-nowrap">
      <TitleBar />
      <MenuBar />
      <Ribbon />
      <main className="flex min-h-0 flex-1">
        <VerticalRuler />
        <div className="flex min-w-0 flex-1 flex-col">
          <HorizontalRuler />
          <DocumentView />
        </div>
        <ScrollBar />
        <SideBar />
      </main>
      <StatusBar />
      <FindDialog />
      <Annotations />
      <Watermark />
    </div>
  );
}
